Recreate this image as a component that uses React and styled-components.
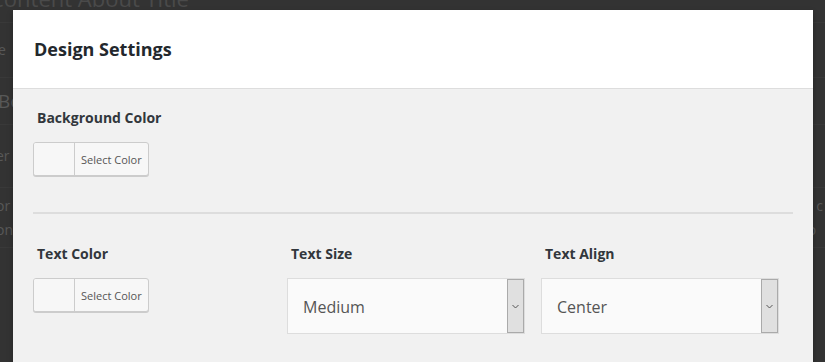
import React from 'react';
import styled, { createGlobalStyle } from 'styled-components';

const GlobalStyle = createGlobalStyle`
  html, body {
    margin: 0;
    padding: 0;
    background: #333;
    overflow: hidden;
  }
  * { box-sizing: border-box; }
`;

// --- underlying page (dimmed behind the modal) ---

const Page = styled.div`
  position: relative;
  width: 825px;
  height: 362px;
  background: #333;
  font-family: "Open Sans", "Liberation Sans", sans-serif;
  color: #585858;
  overflow: hidden;
`;

const PageTitle = styled.div`
  font-size: 22px;
  line-height: 22px;
  margin-top: -13px;
  margin-left: -10px;
  color: #4a4a4a;
  height: 36px;
  border-bottom: 1px solid #393939;
`;

const PageRow = styled.div`
  height: ${(p) => p.h}px;
  border-bottom: 1px solid #393939;
  display: flex;
  align-items: center;
  justify-content: space-between;
  font-size: ${(p) => p.size || 14}px;
  line-height: 24px;
`;

const PageText = styled.span`
  margin-left: ${(p) => p.shift || 0}px;
  margin-right: ${(p) => p.rshift || 0}px;
`;

// --- modal ---

const Modal = styled.div`
  position: absolute;
  left: 13px;
  top: 10px;
  width: 800px;
  height: 400px;
  background: #f1f1f1;
  box-shadow: 0 3px 6px rgba(0, 0, 0, 0.3);
  font-family: "Open Sans", "Liberation Sans", sans-serif;
`;

const Header = styled.div`
  height: 79px;
  background: #fff;
  border-bottom: 1px solid #ddd;
  display: flex;
  align-items: center;
  padding-left: 21px;
`;

const Title = styled.h1`
  margin: 0;
  font-size: 18px;
  font-weight: 700;
  color: #23282d;
`;

const Body = styled.div`
  padding: 20px 20px 0 20px;
`;

const Label = styled.div`
  font-size: 14px;
  font-weight: 700;
  color: #32373c;
  line-height: 18px;
  padding-left: 4px;
  margin-bottom: 15px;
`;

const ColorButton = styled.div`
  display: flex;
  width: 116px;
  height: 34px;
  border: 1px solid #ccc;
  border-radius: 3px;
  background: #f7f7f7;
  box-shadow: 0 1px 0 #ccc;
  overflow: hidden;
`;

const Swatch = styled.div`
  width: 41px;
  border-right: 1px solid #ccc;
  background: #f7f7f7;
`;

const ColorText = styled.div`
  flex: 1;
  display: flex;
  align-items: center;
  padding-left: 6px;
  font-size: 11px;
  color: #555;
`;

const Divider = styled.hr`
  margin: 36px 0 31px 0;
  border: none;
  border-top: 2px solid #ddd;
  width: 760px;
`;

const Columns = styled.div`
  display: grid;
  grid-template-columns: 254px 254px 254px;
`;

const Field = styled.div``;

const Select = styled.div`
  position: relative;
  width: 238px;
  height: 56px;
  background: #fafafa;
  border: 1px solid #ddd;
  display: flex;
  align-items: center;
  padding-left: 15px;
  padding-top: 2px;
  font-size: 16px;
  color: #555;
`;

const Arrow = styled.div`
  position: absolute;
  right: 0;
  top: 0;
  bottom: 0;
  width: 17px;
  background: #e0e0e0;
  border: 1px solid #aaa;
  display: flex;
  align-items: center;
  justify-content: center;
`;

const ColorPicker = () => (
  <ColorButton>
    <Swatch />
    <ColorText>Select Color</ColorText>
  </ColorButton>
);

const Dropdown = ({ value }) => (
  <Select>
    {value}
    <Arrow>
      <svg width="7" height="5" viewBox="0 0 7 5">
        <path d="M0.5 1 L3.5 4 L6.5 1" fill="none" stroke="#555" strokeWidth="1" />
      </svg>
    </Arrow>
  </Select>
);

export default function App() {
  return (
    <>
      <GlobalStyle />
      <Page>
        <PageTitle>Content About Title</PageTitle>
        <PageRow h={55} size={14}>
          <PageText shift={-2}>e</PageText>
        </PageRow>
        <PageRow h={47} size={19}>
          <PageText shift={-2}>Bo</PageText>
        </PageRow>
        <PageRow h={63} size={14}>
          <PageText shift={-4}>er</PageText>
        </PageRow>
        <PageRow h={60} size={14}>
          <PageText shift={-4}>or<br />on</PageText>
          <PageText rshift={2}>t c<br />o</PageText>
        </PageRow>

        <Modal>
          <Header>
            <Title>Design Settings</Title>
          </Header>
          <Body>
            <Label>Background Color</Label>
            <ColorPicker />
            <Divider />
            <Columns>
              <Field>
                <Label>Text Color</Label>
                <ColorPicker />
              </Field>
              <Field>
                <Label>Text Size</Label>
                <Dropdown value="Medium" />
              </Field>
              <Field>
                <Label>Text Align</Label>
                <Dropdown value="Center" />
              </Field>
            </Columns>
          </Body>
        </Modal>
      </Page>
    </>
  );
}
